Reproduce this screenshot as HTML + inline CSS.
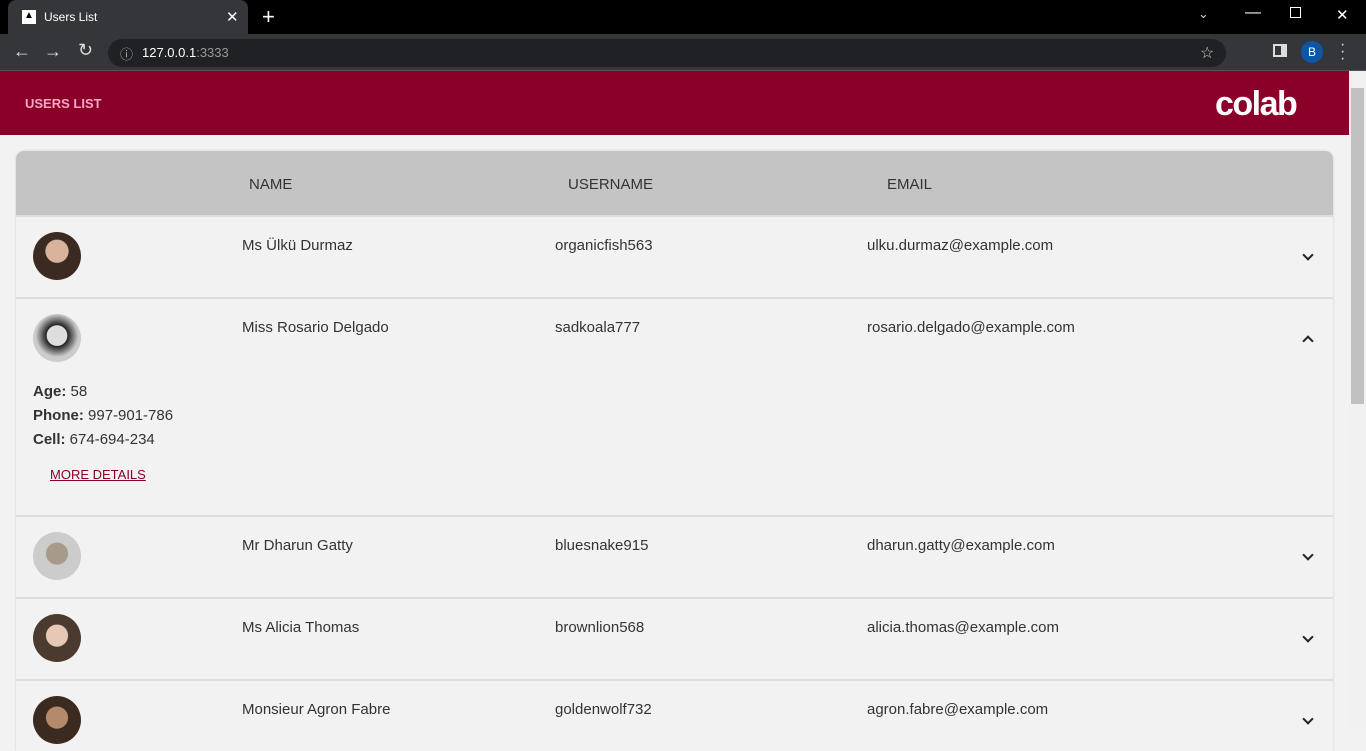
<!DOCTYPE html><html><head><style>
*{box-sizing:border-box;margin:0;padding:0}
body{width:1366px;height:728px;overflow:hidden;background:#f2f2f2;font-family:"Liberation Sans",sans-serif;position:relative}
.top{position:absolute;left:0;top:0;width:1366px;height:34px;background:#000}
.tab{position:absolute;left:8px;top:0;width:240px;height:34px;background:#35363a;border-radius:8px 8px 0 0;color:#fff;font-size:12px}
.bar{position:absolute;left:0;top:34px;width:1366px;height:37px;background:#35363a;border-bottom:1px solid #555}
.url{position:absolute;left:108px;top:5px;width:1118px;height:28px;background:#202124;border-radius:14px;color:#fff;font-size:13px}
.hdr{position:absolute;left:0;top:71px;width:1349px;height:64px;background:#8b0029}
.sb{position:absolute;left:1349px;top:71px;width:17px;height:657px;background:#f1f1f1}
.card{position:absolute;left:16px;top:151px;width:1317px;height:600px;background:#f2f2f2;border-radius:8px 8px 0 0;overflow:hidden;box-shadow:0 0 2px #ccc}
.th{height:64px;background:#c4c4c4;position:relative;font-size:15px;color:#333}
.th span{position:absolute;top:25px}
.row{position:relative;border-top:2px solid #ddd;height:82px;font-size:15px;color:#333}
.row span{position:absolute;top:20px}
.av{position:absolute;left:17px;top:15px;width:48px;height:48px;border-radius:50%;background:radial-gradient(circle at 50% 40%,#d9b49a 0 30%,#3a2a22 32%)}
.chev{position:absolute;left:1288px;top:34px;width:8px;height:8px;border-right:2px solid #222;border-bottom:2px solid #222;transform:rotate(45deg)}
.up{transform:rotate(-135deg);top:38px}
</style></head><body>
<div class="top"><div class="tab"><span style="position:absolute;left:14px;top:10px;width:14px;height:14px;background:#fff;font-size:10px;color:#000;text-align:center">▲</span><span style="position:absolute;left:36px;top:10px">Users List</span><span style="position:absolute;left:218px;top:8px;font-size:15px">✕</span></div>
<span style="position:absolute;left:262px;top:4px;color:#fff;font-size:22px">+</span>
<span style="position:absolute;left:1198px;top:6px;color:#ccc;font-size:13px">⌄</span>
<span style="position:absolute;left:1245px;top:4px;color:#fff;font-size:16px">—</span>
<span style="position:absolute;left:1290px;top:7px;width:11px;height:11px;border:1px solid #fff"></span>
<span style="position:absolute;left:1336px;top:6px;color:#fff;font-size:15px">✕</span></div>
<div class="bar"><span style="position:absolute;left:13px;top:7px;color:#ddd;font-size:18px">←</span><span style="position:absolute;left:44px;top:7px;color:#ddd;font-size:18px">→</span><span style="position:absolute;left:78px;top:6px;color:#ddd;font-size:18px">↻</span>
<div class="url"><span style="position:absolute;left:12px;top:5px;color:#aaa">ⓘ</span><span style="position:absolute;left:34px;top:6px">127.0.0.1<span style="color:#999">:3333</span></span><span style="position:absolute;left:1092px;top:4px;color:#ccc;font-size:16px">☆</span></div>
<span style="position:absolute;left:1273px;top:10px;width:14px;height:13px;border:2px solid #ddd;border-right-width:6px"></span>
<div style="position:absolute;left:1301px;top:7px;width:22px;height:22px;border-radius:50%;background:#0b57a6;color:#fff;font-size:12px;text-align:center;line-height:22px">B</div>
<span style="position:absolute;left:1340px;top:7px;color:#ddd;font-size:16px;line-height:7px">·<br>·<br>·</span></div>
<div class="hdr"><span style="position:absolute;left:25px;top:25px;color:#f7a7c4;font-size:13px;font-weight:bold">USERS LIST</span><span style="position:absolute;left:1215px;top:14px;color:#fff;font-size:34px;font-weight:bold;letter-spacing:-1.5px">colab</span></div>
<div class="sb"><div style="position:absolute;left:2px;top:17px;width:13px;height:316px;background:#c1c1c1"></div></div>
<div class="card">
<div class="th"><span style="left:233px">NAME</span><span style="left:552px">USERNAME</span><span style="left:871px">EMAIL</span></div>
<div class="row"><div class="av"></div><span style="left:226px">Ms Ülkü Durmaz</span><span style="left:539px">organicfish563</span><span style="left:851px">ulku.durmaz@example.com</span><div class="chev"></div></div>
<div class="row" style="height:218px"><div class="av" style="background:radial-gradient(circle at 50% 45%,#ddd 0 28%,#222 30%,#ccc 60%)"></div><span style="left:226px">Miss Rosario Delgado</span><span style="left:539px">sadkoala777</span><span style="left:851px">rosario.delgado@example.com</span><div class="chev up"></div>
<div style="position:absolute;left:17px;top:81px;line-height:24px;font-size:15px"><b>Age:</b> 58<br><b>Phone:</b> 997-901-786<br><b>Cell:</b> 674-694-234</div>
<span style="left:34px;top:168px;font-size:13px;color:#8b0029;text-decoration:underline">MORE DETAILS</span></div>
<div class="row"><div class="av" style="background:radial-gradient(circle at 50% 45%,#a89a8a 0 30%,#ccc 32%)"></div><span style="left:226px">Mr Dharun Gatty</span><span style="left:539px">bluesnake915</span><span style="left:851px">dharun.gatty@example.com</span><div class="chev"></div></div>
<div class="row"><div class="av" style="background:radial-gradient(circle at 50% 45%,#e6c8b4 0 30%,#4a3a30 32%)"></div><span style="left:226px">Ms Alicia Thomas</span><span style="left:539px">brownlion568</span><span style="left:851px">alicia.thomas@example.com</span><div class="chev"></div></div>
<div class="row"><div class="av" style="background:radial-gradient(circle at 50% 45%,#b58a6a 0 30%,#3a2a20 32%)"></div><span style="left:226px">Monsieur Agron Fabre</span><span style="left:539px">goldenwolf732</span><span style="left:851px">agron.fabre@example.com</span><div class="chev"></div></div>
</div>
</body></html>
